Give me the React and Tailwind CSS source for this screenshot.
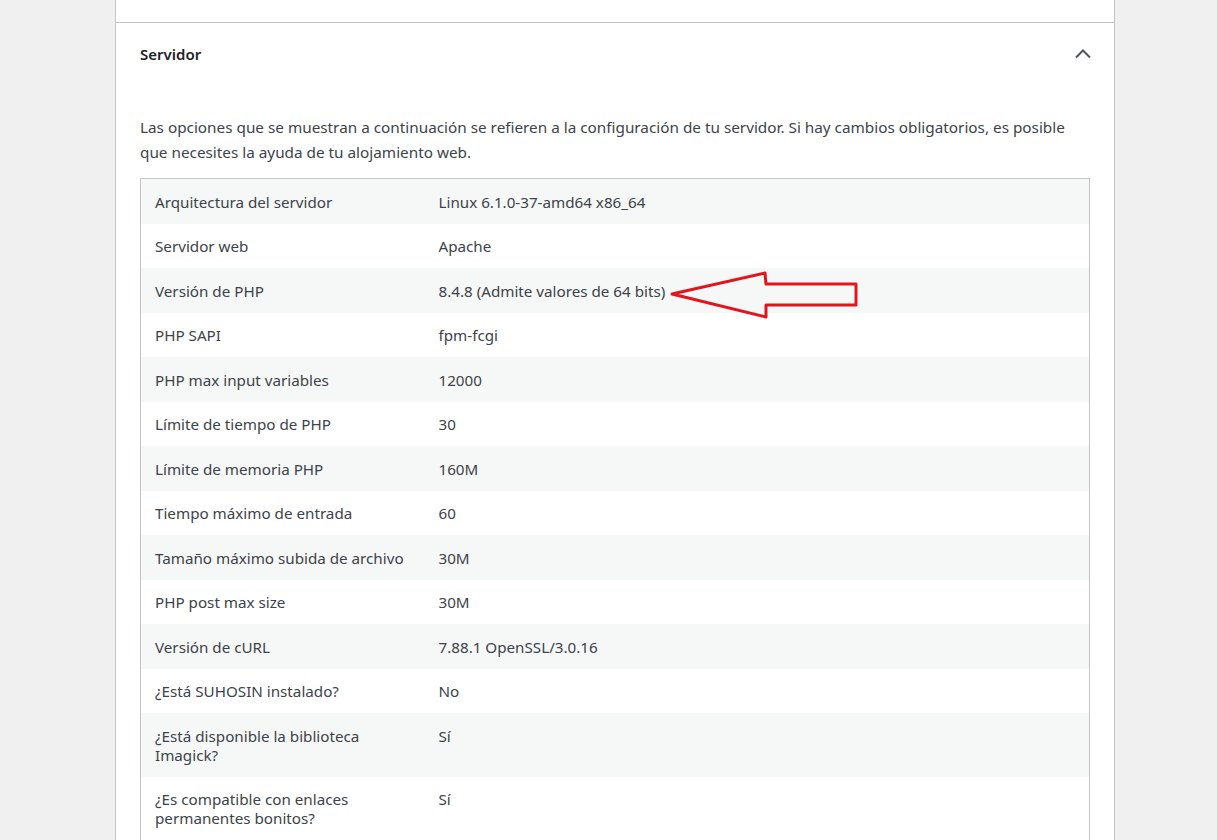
const rows = [
  ['Arquitectura del servidor', 'Linux 6.1.0-37-amd64 x86_64'],
  ['Servidor web', 'Apache'],
  ['Versión de PHP', '8.4.8 (Admite valores de 64 bits)'],
  ['PHP SAPI', 'fpm-fcgi'],
  ['PHP max input variables', '12000'],
  ['Límite de tiempo de PHP', '30'],
  ['Límite de memoria PHP', '160M'],
  ['Tiempo máximo de entrada', '60'],
  ['Tamaño máximo subida de archivo', '30M'],
  ['PHP post max size', '30M'],
  ['Versión de cURL', '7.88.1 OpenSSL/3.0.16'],
  ['¿Está SUHOSIN instalado?', 'No'],
  ['¿Está disponible la biblioteca Imagick?', 'Sí'],
  ['¿Es compatible con enlaces permanentes bonitos?', 'Sí'],
]

function Chevron({ up }) {
  return (
    <svg width="20" height="20" viewBox="0 0 20 20" className="text-[#50575e]">
      <path
        d={up ? 'M3 13.5 L10 6.5 L17 13.5' : 'M3 6.5 L10 13.5 L17 6.5'}
        fill="none"
        stroke="currentColor"
        strokeWidth="2"
      />
    </svg>
  )
}

function App() {
  return (
    <div
      className="h-[840px] overflow-hidden bg-[#f0f0f1] text-[#3c434a]"
      style={{ fontFamily: '"Noto Sans", "Open Sans", sans-serif' }}
    >
      <div className="ml-[115px] w-[1000px] h-[900px] bg-white border-x border-[#c3c4c7] -mt-[37px]">
        <div className="h-[60px] flex items-center justify-between pl-[25px] pr-[21px] border-b border-[#c3c4c7]">
          <span className="text-[15px] font-semibold text-[#1d2327]">Gestión de medios</span>
          <Chevron />
        </div>

        <div className="h-[62px] flex items-center justify-between pl-[24px] pr-[21px]">
          <span className="text-[15px] font-semibold text-[#1d2327]">Servidor</span>
          <Chevron up />
        </div>

        <div className="px-[24px] pt-[30px]">
          <p className="text-[15.3px] leading-[25px] mb-[13px] pr-[12px]">
            Las opciones que se muestran a continuación se refieren a la configuración de tu servidor. Si hay cambios obligatorios, es posible que necesites la ayuda de tu alojamiento web.
          </p>

          <div className="relative">
            <table className="w-[950px] border border-[#c3c4c7] border-collapse text-[15.2px] leading-[19px]">
              <tbody>
                {rows.map((r, i) => (
                  <tr key={i} className={i % 2 === 0 ? 'bg-[#f6f7f7]' : 'bg-white'}>
                    <td className="w-[285px] pl-[14px] pr-[14px] pt-[13.5px] pb-[12px] align-top">{r[0]}</td>
                    <td className="pl-[13px] pr-[14px] pt-[13.5px] pb-[12px] align-top">{r[1]}</td>
                  </tr>
                ))}
              </tbody>
            </table>

            <svg
              className="absolute left-[528px] top-[92px]"
              width="196"
              height="52"
              viewBox="0 0 196 52"
            >
              <polygon
                points="4,24 97,3 98,14 188,14 188,35 98,35 98,47"
                fill="none"
                stroke="#e3141d"
                strokeWidth="3"
                strokeLinejoin="round"
              />
            </svg>
          </div>
        </div>
      </div>
    </div>
  )
}

export default App
